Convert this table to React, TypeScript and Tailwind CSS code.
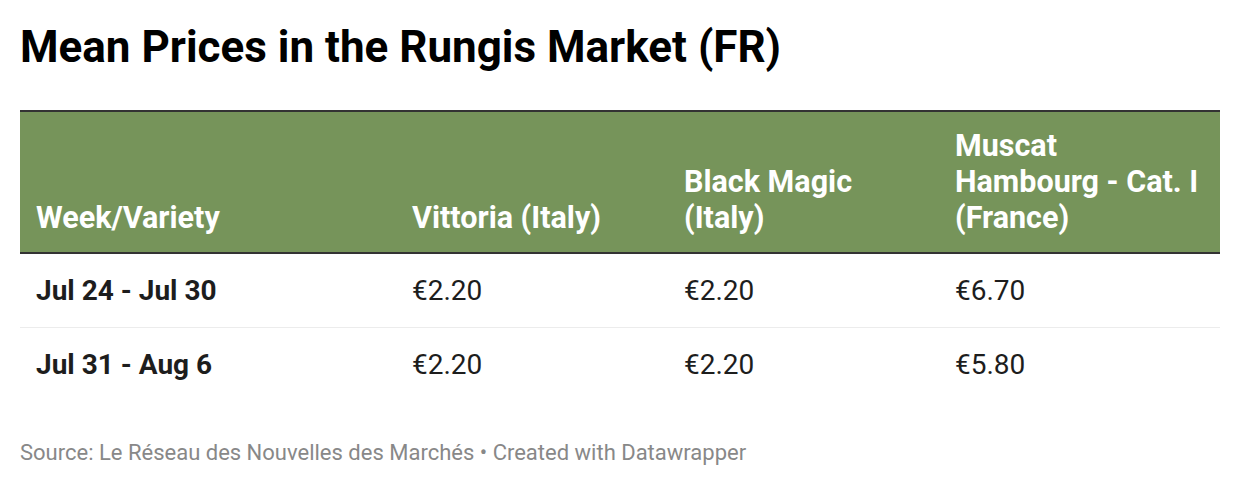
const header = [["Week/Variety"], ["Vittoria (Italy)"], ["Black Magic", "(Italy)"], ["Muscat", "Hambourg - Cat. I", "(France)"]];

const rows = [
  ["Jul 24 - Jul 30", "€2.20", "€2.20", "€6.70"],
  ["Jul 31 - Aug 6", "€2.20", "€2.20", "€5.80"],
];

const cols = "grid grid-cols-[376px_272px_271px_281px]";

export default function App() {
  return (
    <div className="w-[1240px] h-[486px] bg-white px-5 pt-[22px] font-['Roboto',sans-serif] text-[#1d1d1d]">
      <h1 className="text-[44px] leading-[50px] font-bold text-black">
        Mean Prices in the Rungis Market (FR)
      </h1>

      <div className="mt-[38px] w-[1200px]">
        <div className={`${cols} bg-[#76945a] border-y-2 border-[#333] h-[144px]`}>
          {header.map((lines, i) => (
            <div key={i} className="flex flex-col justify-end px-4 pb-[16px] text-[30.5px] leading-[36px] font-bold text-white whitespace-nowrap">
              {lines.map((l) => (
                <span key={l}>{l}</span>
              ))}
            </div>
          ))}
        </div>

        {rows.map((r, ri) => (
          <div
            key={ri}
            className={`${cols} h-[74px] items-center ${ri === 0 ? "border-b border-[#ececec]" : ""}`}
          >
            {r.map((c, ci) => (
              <div key={ci} className={`px-4 text-[28px] leading-[36px] ${ci === 0 ? "font-bold" : ""}`}>
                {c}
              </div>
            ))}
          </div>
        ))}

        <p className="mt-[36px] text-[22px] leading-[30px] text-[#888]">
          Source: Le Réseau des Nouvelles des Marchés • Created with Datawrapper
        </p>
      </div>
    </div>
  );
}
